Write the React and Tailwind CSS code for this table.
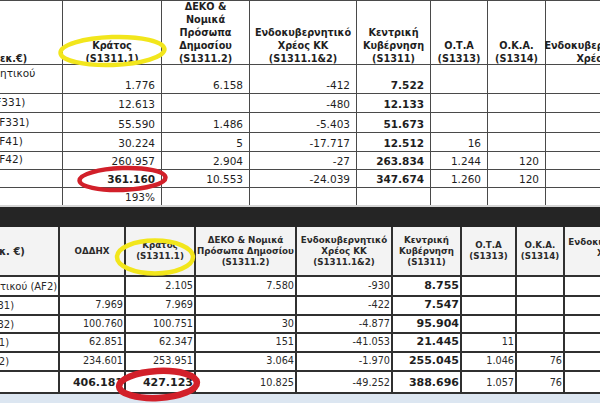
import React from 'react';

const font = "font-['DejaVu_Sans',sans-serif]";

// top table (first screenshot)
const topHead = [
  { w: 'label', lines: ['εκ.€)'] },
  { lines: ['Κράτος', '(S1311.1)'] },
  { lines: ['ΔΕΚΟ &', 'Νομικά', 'Πρόσωπα', 'Δημοσίου', '(S1311.2)'] },
  { lines: ['Ενδοκυβερνητικό', 'Χρέος ΚΚ', '(S1311.1&2)'] },
  { lines: ['Κεντρική', 'Κυβέρνηση', '(S1311)'] },
  { lines: ['Ο.Τ.Α', '(S1313)'] },
  { lines: ['Ο.Κ.Α.', '(S1314)'] },
  { lines: ['Ενδοκυβερνητικό', 'Χρέος'] },
];

const topRows = [
  { h: 'h-[29px]', label: 'ητικού', cut: 'ml-0', top: true, v: ['1.776', '6.158', '-412', '7.522', '', '', ''] },
  { h: 'h-[19px]', label: '(AF331)', cut: '-ml-[16px]', v: ['12.613', '', '-480', '12.133', '', '', ''] },
  { h: 'h-[20px]', label: '(AF331)', cut: '-ml-[12px]', v: ['55.590', '1.486', '-5.403', '51.673', '', '', ''] },
  { h: 'h-[19px]', label: '(AF41)', cut: '-ml-[12px]', v: ['30.224', '5', '-17.717', '12.512', '16', '', ''] },
  { h: 'h-[18px]', label: '(AF42)', cut: '-ml-[12px]', v: ['260.957', '2.904', '-27', '263.834', '1.244', '120', ''] },
  { h: 'h-[18px]', label: '', cut: 'ml-0', v: ['361.160', '10.553', '-24.039', '347.674', '1.260', '120', ''], boldFirst: true },
  { h: 'h-[17px]', label: '', cut: 'ml-0', v: ['193%', '', '', '', '', '', ''], last: true },
];

// bottom table (second screenshot)
const botHead = [
  { lines: ['ΟΔΔΗΧ'] },
  { lines: ['Κράτος', '(S1311.1)'] },
  { lines: ['ΔΕΚΟ & Νομικά', 'Πρόσωπα Δημοσίου', '(S1311.2)'] },
  { lines: ['Ενδοκυβερνητικό', 'Χρέος ΚΚ', '(S1311.1&2)'] },
  { lines: ['Κεντρική', 'Κυβέρνηση', '(S1311)'] },
  { lines: ['Ο.Τ.Α', '(S1313)'] },
  { lines: ['Ο.Κ.Α.', '(S1314)'] },
  { lines: ['Ενδοκυβερνητικό', 'Χρέος'], up: true },
];

const botRows = [
  { h: 'h-[20px]', label: 'τικού (AF2)', cut: 'ml-0', v: ['', '2.105', '7.580', '-930', '8.755', '', '', ''] },
  { h: 'h-[19px]', label: '(AF31)', cut: '-ml-[19px]', v: ['7.969', '7.969', '', '-422', '7.547', '', '', ''] },
  { h: 'h-[18px]', label: '(AF32)', cut: '-ml-[19px]', v: ['100.760', '100.751', '30', '-4.877', '95.904', '', '', ''] },
  { h: 'h-[19px]', label: '(AF41)', cut: '-ml-[24px]', v: ['62.851', '62.347', '151', '-41.053', '21.445', '11', '', ''] },
  { h: 'h-[19px]', label: '(AF42)', cut: '-ml-[24px]', v: ['234.601', '253.951', '3.064', '-1.970', '255.045', '1.046', '76', ''] },
  { h: 'h-[22px]', label: '', cut: 'ml-0', v: ['406.181', '427.123', '10.825', '-49.252', '388.696', '1.057', '76', ''], total: true },
];

function TopTable() {
  return (
    <div className="grid w-[640px] grid-cols-[63px_99px_88px_107px_74px_57px_58px_94px] text-[#1e1e1e]">
      {topHead.map((c, i) => (
        <div
          key={i}
          className={`flex h-[65px] items-end border-t border-b border-r border-[#4a4a4a] font-bold text-[9.7px] leading-[13px] ${
            i === 0 ? 'justify-start overflow-hidden text-[9.5px]' : 'justify-center text-center'
          }`}
        >
          <div className="-mb-[1px] whitespace-nowrap">
            {c.lines.map((l) => (
              <div key={l}>{l}</div>
            ))}
          </div>
        </div>
      ))}
      {topRows.map((r, ri) =>
        [
          <div
            key={`l${ri}`}
            className={`flex overflow-hidden whitespace-nowrap border-r border-[#4a4a4a] text-[10.5px] ${r.h} ${
              r.last ? '' : 'border-b'
            } ${r.top ? 'items-start pt-[1px]' : 'items-end pb-[1px]'}`}
          >
            <span className={r.cut}>{r.label}</span>
          </div>,
          ...r.v.map((val, ci) => (
            <div
              key={`${ri}-${ci}`}
              className={`flex items-end justify-end border-r border-[#4a4a4a] pr-[6px] pb-[1px] text-[10.5px] leading-[14px] ${r.h} ${
                r.last ? '' : 'border-b'
              } ${ci === 3 || (r.boldFirst && ci === 0) ? 'font-bold' : ''}`}
            >
              {val}
            </div>
          )),
        ]
      )}
    </div>
  );
}

function BottomTable() {
  return (
    <div className="grid w-[660px] grid-cols-[60px_66px_70px_101px_96px_69px_55px_48px_95px] text-[#2a2a2a]">
      <div className="flex h-[50px] items-center overflow-hidden whitespace-nowrap border-b-2 border-r-2 border-[#303030] bg-[#f3f3f3] text-[10px] font-bold">
        <span className="-ml-[1px]">κ. €)</span>
      </div>
      {botHead.map((c, i) => (
        <div
          key={i}
          className="flex h-[50px] items-center justify-center border-b-2 border-r-2 border-[#303030] bg-[#f3f3f3] text-center text-[8.7px] font-bold leading-[11px]"
        >
          <div className={`whitespace-nowrap ${c.up ? 'mb-[7px]' : ''}`}>
            {c.lines.map((l) => (
              <div key={l}>{l}</div>
            ))}
          </div>
        </div>
      ))}
      {botRows.map((r, ri) =>
        [
          <div
            key={`l${ri}`}
            className={`flex items-center overflow-hidden whitespace-nowrap border-b-2 border-r-2 border-[#303030] text-[10px] ${r.h}`}
          >
            <span className={r.cut}>{r.label}</span>
          </div>,
          ...r.v.map((val, ci) => {
            const bold = ci === 4 || (r.total && ci < 2);
            return (
              <div
                key={`${ri}-${ci}`}
                className={`flex items-center justify-end border-b-2 border-r-2 border-[#303030] pr-[1px] ${r.h} ${
                  bold ? 'text-[11px] font-bold text-[#1e1e1e]' : 'text-[9.7px]'
                } ${r.total ? 'pt-[3px]' : ''}`}
              >
                {val}
              </div>
            );
          }),
        ]
      )}
    </div>
  );
}

function Marks() {
  return (
    <svg className="pointer-events-none absolute inset-0" width="600" height="403" viewBox="0 0 600 403">
      <ellipse cx="112.5" cy="51" rx="52" ry="14" fill="none" stroke="#f2e61c" strokeWidth="4.5" transform="rotate(-2 112.5 51)" />
      <ellipse cx="122.5" cy="179" rx="43" ry="11" fill="none" stroke="#d2202a" strokeWidth="4.5" transform="rotate(-2 122.5 179)" />
      <ellipse cx="155" cy="257" rx="38" ry="16.5" fill="none" stroke="#f2e61c" strokeWidth="4.5" />
      <ellipse cx="158" cy="384.5" rx="39" ry="13.5" fill="none" stroke="#d2202a" strokeWidth="6.5" transform="rotate(-3 158 384.5)" />
    </svg>
  );
}

export default function App() {
  return (
    <div className={`relative flex h-[403px] w-[600px] flex-col overflow-hidden bg-white ${font}`}>
      <TopTable />
      <div className="h-[2px] w-full bg-[#d6d6d6]" />
      <div className="h-[20px] w-full bg-[#252525]" />
      <BottomTable />
      <div className="flex-1 bg-[#dce6f1]" />
      <Marks />
    </div>
  );
}
